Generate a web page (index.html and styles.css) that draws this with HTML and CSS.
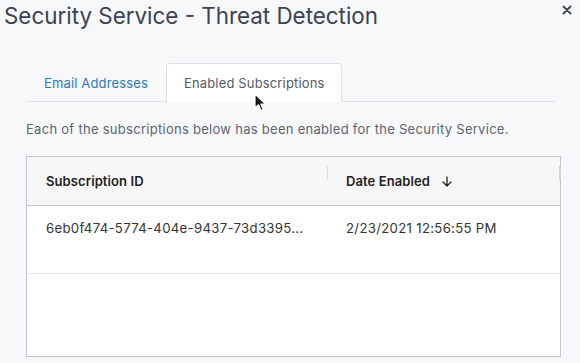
FILE: index.html
```html
<!DOCTYPE html>
<html lang="en">
<head>
  <meta charset="UTF-8" />
  <meta name="viewport" content="width=device-width, initial-scale=1.0" />
  <title>Security Service - Threat Detection</title>
  <link rel="stylesheet" href="styles.css">
</head>
<body>
  <div class="dialog">
    <div class="dialog-header">
      <h1>Security Service - Threat Detection</h1>
      <button class="close" aria-label="Close">
        <svg width="10" height="10" viewBox="0 0 10 10"><path d="M1.5 1.5 L8.5 8.5 M8.5 1.5 L1.5 8.5" stroke="#3a4150" stroke-width="1.8" stroke-linecap="round"/></svg>
      </button>
    </div>
    <div class="dialog-body">
      <div class="tabs">
        <div class="tab">Email Addresses</div>
        <div class="tab active">Enabled Subscriptions
          <svg class="cursor" width="14" height="20" viewBox="0 0 14 20"><path d="M1 1 L1 15 L4.5 11.8 L7 17.5 L9.2 16.5 L6.8 11 L11.5 11 Z" fill="#111" stroke="#fff" stroke-width="1.2" stroke-linejoin="round"/></svg>
        </div>
      </div>
      <p class="desc">Each of the subscriptions below has been enabled for the Security Service.</p>
      <div class="grid">
        <div class="grid-head">
          <div class="col col-id">Subscription ID</div>
          <div class="col col-date">
            <span class="sep"></span>
            Date Enabled
            <svg class="sort" width="10" height="11" viewBox="0 0 10 11"><path d="M5 1 L5 10 M1 6 L5 10 L9 6" fill="none" stroke="#222" stroke-width="1.3" stroke-linecap="round" stroke-linejoin="round"/></svg>
            <span class="grip"></span>
          </div>
        </div>
        <div class="grid-row">
          <div class="col col-id">6eb0f474-5774-404e-9437-73d3395...</div>
          <div class="col col-date">2/23/2021 12:56:55 PM</div>
        </div>
        <div class="grid-empty"></div>
      </div>
    </div>
  </div>
</body>
</html>
```

FILE: styles.css
```css
body { margin: 0; background: #f7f8fa; font-family: Inter, 'Noto Sans', sans-serif; color: #333; }
.dialog { width: 580px; height: 363px; }
.dialog-header { display: flex; justify-content: space-between; align-items: flex-start; padding: 1px 8px 0 4px; }
h1 { margin: 0; font-size: 22.4px; font-weight: 400; line-height: 30px; color: #3b4351; }
.close { background: none; border: none; padding: 0; margin-top: 4px; cursor: pointer; line-height: 0; }
.dialog-body { padding: 32px 19px 0 26px; }
.tabs { display: flex; border-bottom: 1px solid #dde1e6; height: 38px; margin-right: 6px; }
.tab { position: relative; padding: 0 17px; height: 38px; line-height: 38px; font-size: 13px; letter-spacing: 0.15px; color: #2a78c2; box-sizing: border-box; border: 1px solid transparent; border-bottom: none; }
.tab.active { background: #fff; color: #555b66; border-color: #dde1e6; border-radius: 4px 4px 0 0; height: 39px; margin-bottom: -1px; }
.cursor { position: absolute; left: 87px; top: 29px; }
.desc { margin: 14px 0 0; font-size: 13px; letter-spacing: 0.28px; line-height: 26px; color: #5d6470; }
.grid { margin-top: 14px; border: 1px solid #c3c6cc; height: 199px; background: #fff; display: flex; flex-direction: column; }
.grid-head { display: flex; height: 48px; background: #f7f7f8; border-bottom: 1px solid #c3c6cc; align-items: center; font-size: 13px; letter-spacing: 0.1px; font-weight: 600; color: #222; }
.grid-row { display: flex; height: 68px; border-bottom: 1px solid #dfe2e7; font-size: 13.2px; letter-spacing: 0.3px; color: #333; padding-top: 13px; box-sizing: border-box; }
.col { padding-left: 19px; box-sizing: border-box; }
.col-id { width: 300px; }
.col-date { flex: 1; position: relative; display: flex; align-items: center; gap: 12px; }
.grid-row .col { display: block; line-height: 18px; }
.sep { position: absolute; left: 0; top: -7px; width: 1px; height: 14px; background: #dcdde1; }
.sort { margin-top: 1px; }
.grip { position: absolute; right: -1px; top: -7px; width: 2px; height: 14px; background: #d4d6db; }
.grid-empty { flex: 1; }
```
